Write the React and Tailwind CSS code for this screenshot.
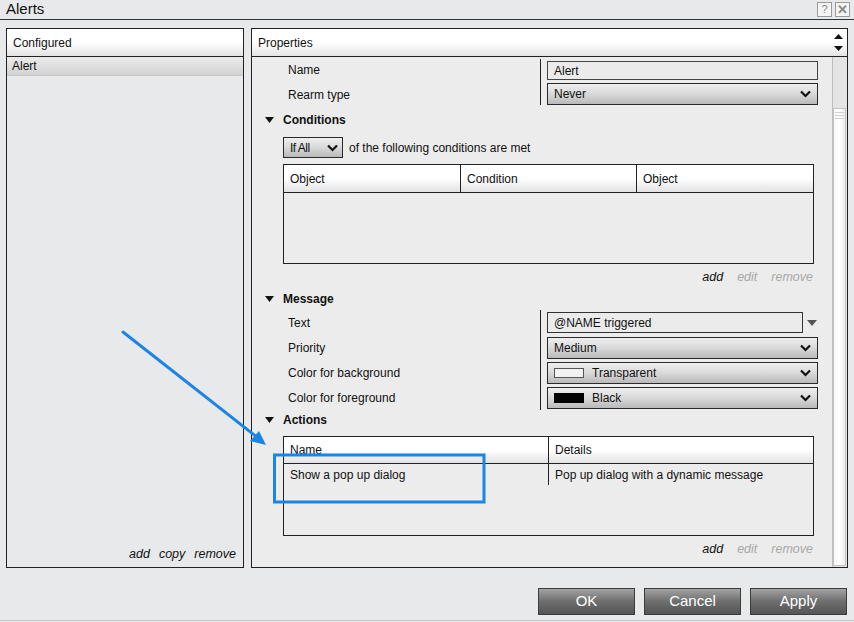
import React from 'react';

const font = { fontFamily: '"Liberation Sans", Arial, sans-serif' };

// Chevron used on the combo boxes
const Chevron = () => (
    <svg width="11" height="8" viewBox="0 0 11 8" className="shrink-0">
        <path d="M1 1.5 L5.5 6 L10 1.5" fill="none" stroke="#111" strokeWidth="2.2" />
    </svg>
);

const Select = ({ children, className = '' }) => (
    <div className={`h-[22px] flex items-center justify-between pl-[6px] pr-[6px] border border-[#2a2a2a] bg-gradient-to-b from-[#efefef] via-[#d9d9d9] to-[#b9b9b9] text-[12px] text-[#111] ${className}`}>
        <div className="flex items-center">{children}</div>
        <Chevron />
    </div>
);

const SectionHeader = ({ title, className = '' }) => (
    <div className={`flex items-center pl-[13px] ${className}`}>
        <svg width="9" height="6" viewBox="0 0 9 6" className="mr-[9px]">
            <path d="M0 0 L9 0 L4.5 6 Z" fill="#111" />
        </svg>
        <span className="text-[12px] font-bold text-[#111]">{title}</span>
    </div>
);

const TableActions = () => (
    <div className="h-[26px] flex items-center justify-end gap-[14px] pr-[19px] text-[12.5px] italic">
        <span className="text-[#111]">add</span>
        <span className="text-[#a8a8a8]">edit</span>
        <span className="text-[#a8a8a8]">remove</span>
    </div>
);

const HeaderCell = ({ children, className = '' }) => (
    <div className={`flex items-center pl-[6px] text-[12px] text-[#111] ${className}`}>{children}</div>
);

const ActionButton = ({ label }) => (
    <button className="w-[97px] h-[27px] border border-[#3c3c3c] bg-gradient-to-b from-[#a4a4a4] via-[#6e6e6e] to-[#555555] text-white text-[15px] flex items-center justify-center">
        {label}
    </button>
);

export default function App() {
    return (
        <div style={font} className="w-[854px] h-[622px] bg-[#e8e9ea] flex flex-col relative overflow-hidden">
            {/* Title bar */}
            <div className="h-[20px] flex items-center justify-between pl-[6px] pr-[4px] border-b border-[#333]">
                <span className="text-[15px] text-[#111]">Alerts</span>
                <div className="flex gap-[3px]">
                    <div className="w-[15px] h-[15px] border border-[#9a9a9a] bg-[#f4f4f4] flex items-center justify-center text-[11px] text-[#888]">?</div>
                    <div className="w-[15px] h-[15px] border border-[#9a9a9a] bg-[#f4f4f4] flex items-center justify-center text-[13px] font-bold text-[#888]">✕</div>
                </div>
            </div>

            {/* Panels */}
            <div className="flex gap-[7px] pl-[6px] pt-[8px] h-[548px]">
                {/* Configured */}
                <div className="w-[238px] border border-[#222] bg-[#e8e9ea] flex flex-col">
                    <div className="h-[28px] flex items-center pl-[6px] border-b border-[#222] bg-gradient-to-b from-white via-white to-[#e2e2e2] text-[12px] text-[#111]">
                        Configured
                    </div>
                    <div className="h-[19px] flex items-center pl-[5px] bg-gradient-to-b from-[#ececec] to-[#d2d2d2] border-b border-[#c8c8c8] text-[12px] text-[#111]">
                        Alert
                    </div>
                    <div className="flex-1" />
                    <div className="h-[26px] flex items-center justify-end gap-[9px] pr-[7px] text-[12.5px] italic text-[#111]">
                        <span>add</span>
                        <span>copy</span>
                        <span>remove</span>
                    </div>
                </div>

                {/* Properties */}
                <div className="w-[597px] border border-[#222] bg-[#ececec] flex flex-col">
                    <div className="h-[28px] flex items-center justify-between pl-[6px] pr-[4px] border-b border-[#222] bg-gradient-to-b from-white via-white to-[#e4e4e4] text-[12px] text-[#111]">
                        <span>Properties</span>
                        <div className="flex flex-col gap-[7px]">
                            <svg width="9" height="5" viewBox="0 0 9 5"><path d="M0 5 L9 5 L4.5 0 Z" fill="#111" /></svg>
                            <svg width="9" height="5" viewBox="0 0 9 5"><path d="M0 0 L9 0 L4.5 5 Z" fill="#111" /></svg>
                        </div>
                    </div>

                    <div className="flex flex-1">
                        <div className="flex-1 flex flex-col">
                            {/* General */}
                            <div className="flex mb-[3px]">
                                <div className="w-[288px] pl-[36px] text-[12px] text-[#111]">
                                    <div className="h-[25px] flex items-center">Name</div>
                                    <div className="h-[25px] flex items-center">Rearm type</div>
                                </div>
                                <div className="w-[278px] border-l border-[#222] pl-[6px] my-[2px]">
                                    <div className="h-[23px] flex items-center">
                                        <div className="w-full h-[19px] border border-[#444] bg-[#ebebeb] flex items-center pl-[6px] text-[12px] text-[#111]">Alert</div>
                                    </div>
                                    <div className="h-[23px] flex items-center">
                                        <Select className="w-full">Never</Select>
                                    </div>
                                </div>
                            </div>

                            {/* Conditions */}
                            <SectionHeader title="Conditions" className="h-[20px]" />
                            <div className="flex items-center pl-[31px] mt-[7px] h-[21px]">
                                <div className="w-[60px] h-[21px] flex items-center justify-between pl-[6px] pr-[4px] border border-[#2a2a2a] bg-gradient-to-b from-[#efefef] via-[#d9d9d9] to-[#b9b9b9] text-[12px] text-[#111]">
                                    <span className="tracking-[-0.5px]">If All</span>
                                    <Chevron />
                                </div>
                                <span className="ml-[6px] text-[12px] text-[#111]">of the following conditions are met</span>
                            </div>
                            <div className="ml-[31px] mt-[6px] w-[531px] h-[100px] border border-[#222] flex flex-col">
                                <div className="h-[28px] flex border-b border-[#222] bg-gradient-to-b from-white via-white to-[#e2e2e2]">
                                    <HeaderCell className="w-[177px] border-r border-[#222]">Object</HeaderCell>
                                    <HeaderCell className="w-[176px] border-r border-[#222]">Condition</HeaderCell>
                                    <HeaderCell className="flex-1">Object</HeaderCell>
                                </div>
                                <div className="flex-1 bg-[#ececec]" />
                            </div>
                            <TableActions />

                            {/* Message */}
                            <SectionHeader title="Message" className="h-[18px]" />
                            <div className="flex mt-[2px]">
                                <div className="w-[288px] pl-[36px] text-[12px] text-[#111]">
                                    <div className="h-[25px] flex items-center">Text</div>
                                    <div className="h-[25px] flex items-center">Priority</div>
                                    <div className="h-[25px] flex items-center">Color for background</div>
                                    <div className="h-[25px] flex items-center">Color for foreground</div>
                                </div>
                                <div className="w-[278px] border-l border-[#222] pl-[6px]">
                                    <div className="h-[25px] flex items-center">
                                        <div className="w-[256px] h-[21px] border border-[#333] bg-[#ebebeb] flex items-center pl-[6px] text-[12px] text-[#111]">@NAME triggered</div>
                                        <svg width="10" height="6" viewBox="0 0 10 6" className="ml-[4px]"><path d="M0 0 L10 0 L5 6 Z" fill="#555" /></svg>
                                    </div>
                                    <div className="h-[25px] flex items-center">
                                        <Select className="w-full">Medium</Select>
                                    </div>
                                    <div className="h-[25px] flex items-center">
                                        <Select className="w-full">
                                            <span className="w-[30px] h-[10px] border border-[#555] bg-[#f2f2f2] mr-[8px]" />
                                            Transparent
                                        </Select>
                                    </div>
                                    <div className="h-[25px] flex items-center">
                                        <Select className="w-full">
                                            <span className="w-[30px] h-[10px] bg-black mr-[8px]" />
                                            Black
                                        </Select>
                                    </div>
                                </div>
                            </div>

                            {/* Actions */}
                            <SectionHeader title="Actions" className="h-[20px]" />
                            <div className="ml-[31px] mt-[6px] w-[531px] h-[100px] border border-[#222] flex flex-col">
                                <div className="h-[27px] flex border-b border-[#222] bg-gradient-to-b from-white via-white to-[#e2e2e2]">
                                    <HeaderCell className="w-[265px] border-r border-[#222]">Name</HeaderCell>
                                    <HeaderCell className="flex-1">Details</HeaderCell>
                                </div>
                                <div className="h-[21px] flex text-[12px] text-[#111]">
                                    <div className="w-[265px] pl-[6px] flex items-center border-r border-[#222]">Show a pop up dialog</div>
                                    <div className="flex-1 pl-[6px] flex items-center">Pop up dialog with a dynamic message</div>
                                </div>
                                <div className="flex-1" />
                            </div>
                            <TableActions />
                        </div>

                        {/* Scrollbar */}
                        <div className="w-[15px] bg-[#e4e4e4] border-l border-[#bdbdbd] flex flex-col pt-[51px] pb-[1px] pr-[1px]">
                            <div className="flex-1 bg-gradient-to-r from-[#f7f7f7] via-white to-[#ececec] border border-[#c4c4c4] flex flex-col items-center pt-[3px] gap-[2px]">
                                <div className="w-[9px] h-px bg-[#d0d0d0]" />
                                <div className="w-[9px] h-px bg-[#d0d0d0]" />
                                <div className="w-[9px] h-px bg-[#d0d0d0]" />
                            </div>
                        </div>
                    </div>
                </div>
            </div>

            {/* Buttons */}
            <div className="flex justify-end gap-[9px] pr-[7px] pt-[20px]">
                <ActionButton label="OK" />
                <ActionButton label="Cancel" />
                <ActionButton label="Apply" />
            </div>
            <div className="absolute left-0 right-0 bottom-[1px] h-px bg-[#c6c6c6]" />

            {/* Annotation overlay */}
            <svg className="absolute inset-0 pointer-events-none" width="854" height="622">
                <line x1="123" y1="332" x2="258" y2="438" stroke="#1a85e6" strokeWidth="3" strokeLinecap="round" />
                <path d="M266 445 L250 441 L259 431 Z" fill="#1a85e6" />
                <rect x="274.5" y="455" width="209.5" height="47" fill="none" stroke="#1a85e6" strokeWidth="3" />
            </svg>
        </div>
    );
}
